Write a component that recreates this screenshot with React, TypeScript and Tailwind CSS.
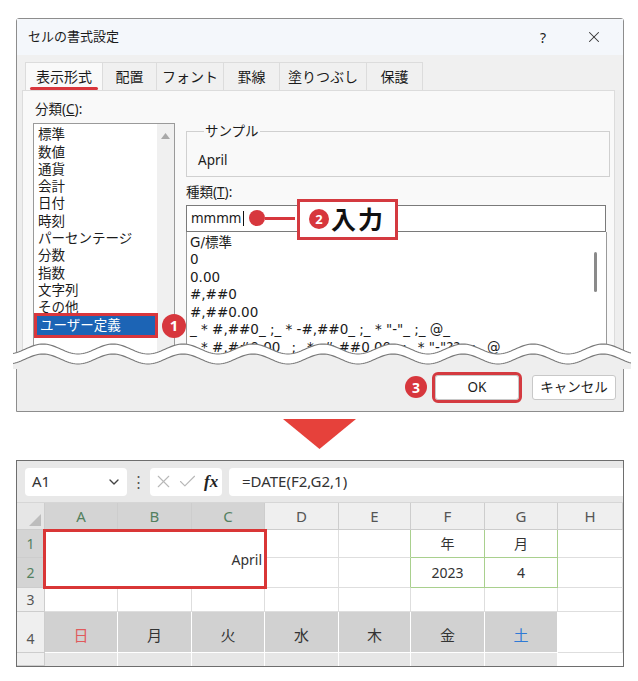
import { Check, ChevronDown, X } from 'lucide-react';

const CATEGORIES = ['標準', '数値', '通貨', '会計', '日付', '時刻', 'パーセンテージ', '分数', '指数', '文字列', 'その他'];

const FORMATS = [
  'G/標準',
  '0',
  '0.00',
  '#,##0',
  '#,##0.00',
  '_ * #,##0_ ;_ * -#,##0_ ;_ * "-"_ ;_ @_',
  '_ * #,##0.00_ ;_ * -#,##0.00_ ;_ * "-"??_ ;_ @_',
];

const TABS = [
  { t: '表示形式', w: 'w-[78px]' },
  { t: '配置', w: 'w-[54px]' },
  { t: 'フォント', w: 'w-[67px]' },
  { t: '罫線', w: 'w-[56px]' },
  { t: '塗りつぶし', w: 'w-[87px]' },
  { t: '保護', w: 'w-[56px]' },
];

const DAYS = [
  { t: '日', c: 'text-[#e05a5c]' },
  { t: '月', c: 'text-[#333]' },
  { t: '火', c: 'text-[#333]' },
  { t: '水', c: 'text-[#333]' },
  { t: '木', c: 'text-[#333]' },
  { t: '金', c: 'text-[#333]' },
  { t: '土', c: 'text-[#2f7ad6]' },
];

// torn-paper wave for the cut between the dialog halves
function wave(y0: number, w: number) {
  const pts: string[] = [];
  for (let x = 0; x <= w; x += 2) {
    const y = y0 + 5 * Math.sin(((x - 30) / 70) * 2 * Math.PI - Math.PI / 2);
    pts.push(`${x} ${y.toFixed(2)}`);
  }
  return pts;
}

const WW = 618;
const TOPW = wave(10, WW);
const BOTW = wave(20, WW);
const BAND = 'M' + TOPW.join(' L') + ' L' + BOTW.slice().reverse().join(' L') + ' Z';
const BELOW = 'M' + BOTW.join(' L') + ` L${WW} 30 L0 30 Z`;

function Badge({ n, size }: { n: string; size: string }) {
  return (
    <span className={`${size} rounded-full bg-[#d7373d] text-white font-bold flex items-center justify-center shrink-0`}>{n}</span>
  );
}

function Dialog() {
  return (
    <div className="ml-4 mt-[18px] w-[608px] h-[394px] border border-[#8d8d8d] rounded-t-[3px] bg-[#eeeeee] flex flex-col relative">
      {/* title bar */}
      <div className="h-[36px] bg-[#f4f7fb] flex items-center pl-[11px] pr-[20px] text-[13px] text-[#1b1b1b]">
        <span className="flex-1">セルの書式設定</span>
        <span className="w-[30px] text-center text-[14px]">?</span>
        <X size={18} strokeWidth={1.4} className="ml-[27px] text-[#333]" />
      </div>

      {/* tabs */}
      <div className="h-[35px] flex items-end pl-[8px] bg-[#f0f0f0]">
        {TABS.map((t, i) => (
          <div
            key={t.t}
            className={`${t.w} h-[28px] flex items-center justify-center text-[14px] text-[#1b1b1b] relative border-t border-r border-[#dcdcdc] ${
              i === 0 ? 'bg-[#f9f9f9] border-l' : 'bg-[#f0f0f0]'
            }`}
          >
            {t.t}
            {i === 0 && <span className="absolute left-[4px] right-[4px] bottom-[0px] h-[3px] rounded-full bg-[#d9363c]" />}
          </div>
        ))}
      </div>

      {/* panel */}
      <div className="ml-[5px] mr-[8px] h-[268px] border border-[#dcdcdc] bg-[#f9f9f9] flex overflow-hidden text-[13.5px] text-[#1b1b1b] leading-[17.3px]">
        <div className="ml-[10px] w-[142px] pt-[10px] flex flex-col">
          <div className="ml-[2px]">
            分類(<span className="underline">C</span>):
          </div>
          <div className="mt-[5px] flex-1 border border-[#9a9a9a] bg-white flex">
            <div className="flex-1 pt-[2px]">
              {CATEGORIES.map((c) => (
                <div key={c} className="pl-[4px]">{c}</div>
              ))}
              <div className="ml-[3px] mr-[2px] pl-[3px] py-px -my-px bg-[#1c64b5] text-white outline-[3px] outline-solid outline-[#d9363c] relative">
                ユーザー定義
                <span className="absolute -right-[31px] -top-[2px]">
                  <Badge n="1" size="w-[24px] h-[24px] text-[15px]" />
                </span>
              </div>
            </div>
            <div className="w-[17px] bg-[#f0f0f0] flex justify-center pt-[9px]">
              <svg width="9" height="6" viewBox="0 0 9 6">
                <polygon points="4.5,0 9,6 0,6" fill="#a8a8a8" />
              </svg>
            </div>
          </div>
        </div>

        <div className="ml-[11px] w-[424px] flex flex-col">
          <fieldset className="mt-[32px] border border-[#d0d0d0] pb-[6px] pl-[11px]">
            <legend className="ml-[6px] px-[1px]">サンプル</legend>
            <div className="pt-[12px]">April</div>
          </fieldset>
          <div className="mt-[7px]">
            種類(<span className="underline">T</span>):
          </div>
          <div className="mt-[4px] w-[420px] h-[27px] border border-[#7a7a7a] bg-white flex items-center pl-[4px] relative">
            <span>mmmm</span>
            <span className="w-px h-[15px] bg-[#111] ml-px" />
            <span className="w-[16px] h-[16px] rounded-full bg-[#d7373d] ml-[5px] shrink-0" />
            <span className="w-[30px] h-[3px] bg-[#d7373d] shrink-0" />
            <div className="absolute left-[110px] -top-[7px] w-[101px] h-[41px] border-[3px] border-[#d43a40] bg-white flex items-center pl-[9px] gap-[2px]">
              <Badge n="2" size="w-[20px] h-[20px] text-[13px]" />
              <span className="text-[25px] font-bold text-[#111] leading-none tracking-[2px]">入力</span>
            </div>
          </div>
          <div className="w-[421px] flex-1 border border-t-0 border-[#9a9a9a] bg-white flex leading-[17.5px]">
            <div className="flex-1 pt-[2px] pl-[3px] whitespace-pre text-[13.5px] font-['DejaVu_Sans','Noto_Sans_CJK_JP',sans-serif]">
              {FORMATS.map((f) => (
                <div key={f}>{f}</div>
              ))}
            </div>
            <div className="w-[22px] flex justify-center pt-[20px]">
              <div className="w-[3px] h-[40px] rounded-full bg-[#8a8a8a]" />
            </div>
          </div>
        </div>
      </div>

      {/* cut */}
      <svg className="absolute left-[-4px] top-[320px]" width={WW} height="30" viewBox={`0 0 ${WW} 30`}>
        <path d={BELOW} fill="#eeeeee" />
        <path d={BAND} fill="#ffffff" />
        <path d={'M' + TOPW.join(' L')} fill="none" stroke="#777" strokeWidth="1.1" />
        <path d={'M' + BOTW.join(' L')} fill="none" stroke="#777" strokeWidth="1.1" />
      </svg>

      {/* buttons */}
      <div className="flex-1 flex items-center justify-end pr-[7px] pt-[5px] text-[13.5px] text-[#1b1b1b]">
        <Badge n="3" size="w-[22px] h-[22px] text-[14px]" />
        <div className="ml-[8px] w-[84px] h-[25px] rounded-[3px] border border-[#c8c8c8] bg-white flex items-center justify-center outline-[3px] outline-solid outline-[#d43a40]">
          OK
        </div>
        <div className="ml-[13px] w-[84px] h-[25px] rounded-[3px] border border-[#c8c8c8] bg-white flex items-center justify-center">
          キャンセル
        </div>
      </div>
    </div>
  );
}

const CELL = 'border-r border-b border-[#dedede] bg-white flex items-center justify-center';
const HEAD = 'border-r border-b border-[#cdcdcd] flex items-center justify-center';

function Sheet() {
  const cols = ['A', 'B', 'C', 'D', 'E', 'F', 'G', 'H'];
  return (
    <div className="ml-4 mt-[11px] w-[608px] h-[207px] border border-[#6e6e6e] flex flex-col text-[#333]">
      {/* formula bar */}
      <div className="h-[42px] bg-[#e8e8e8] flex items-center pl-[8px] border-b border-[#d6d6d6]">
        <div className="w-[102px] h-[28px] rounded-[4px] bg-white flex items-center pl-[7px] pr-[5px] text-[15px]">
          <span className="flex-1">A1</span>
          <ChevronDown size={16} strokeWidth={2} className="text-[#444]" />
        </div>
        <span className="w-[23px] text-center text-[15px] text-[#555]">⋮</span>
        <div className="w-[72px] h-[28px] rounded-[4px] bg-white flex items-center pl-[3px] gap-[3px]">
          <X size={21} strokeWidth={1.3} className="text-[#b8b8b8]" />
          <Check size={21} strokeWidth={1.3} className="text-[#b8b8b8]" />
          <span className="ml-[3px] font-['Liberation_Serif',serif] italic font-bold text-[17px] text-[#222]">fx</span>
        </div>
        <div className="ml-[7px] flex-1 h-[28px] rounded-l-[4px] bg-white flex items-center pl-[13px] text-[15px]">
          =DATE(F2,G2,1)
        </div>
      </div>

      <div className="flex-1 grid grid-cols-[28px_73px_74px_73px_74px_72px_74px_73px_1fr] grid-rows-[27px_28px_30px_24px_41px_1fr] overflow-hidden">
        {/* header row */}
        <div className="border-r border-b border-[#cdcdcd] bg-[#e6e6e6] flex items-end justify-end p-[3px]">
          <svg width="12" height="12" viewBox="0 0 12 12">
            <polygon points="12,0 12,12 0,12" fill="#bdbdbd" />
          </svg>
        </div>
        {cols.map((c, i) => (
          <div key={c} className={`${HEAD} text-[15px] ${i < 3 ? 'bg-[#d4d4d4] text-[#53805f]' : 'bg-[#efefef] text-[#555]'}`}>
            {c}
          </div>
        ))}

        {/* row 1 */}
        <div className={`${HEAD} bg-[#d4d4d4] text-[#53805f] text-[14px]`}>1</div>
        <div className="col-span-3 row-span-2 -ml-[2px] -mr-[2px] -mt-[1px] -mb-[1px] border-[3px] border-[#d93636] bg-white flex items-center justify-end pr-[2px] text-[14px] relative z-10">
          April
        </div>
        <div className={CELL} />
        <div className={`${CELL} border-r-[#a9d08e]`} />
        <div className={`${CELL} bg-[#e2efda] border-r-[#a9d08e] border-b-[#a9d08e] text-[14px]`}>年</div>
        <div className={`${CELL} bg-[#e2efda] border-r-[#a9d08e] border-b-[#a9d08e] text-[14px]`}>月</div>
        <div className={CELL} />

        {/* row 2 */}
        <div className={`${HEAD} bg-[#d4d4d4] text-[#53805f] text-[14px]`}>2</div>
        <div className={CELL} />
        <div className={`${CELL} border-r-[#a9d08e]`} />
        <div className={`${CELL} border-r-[#a9d08e] border-b-[#a9d08e] text-[14px]`}>2023</div>
        <div className={`${CELL} border-r-[#a9d08e] border-b-[#a9d08e] text-[14px]`}>4</div>
        <div className={CELL} />

        {/* row 3 */}
        <div className={`${HEAD} bg-[#efefef] text-[#555] text-[14px]`}>3</div>
        {cols.map((c) => (
          <div key={c} className={CELL} />
        ))}

        {/* row 4 */}
        <div className={`${HEAD} bg-[#efefef] text-[#555] text-[14px] items-end pb-[3px]`}>4</div>
        {DAYS.map((d) => (
          <div key={d.t} className={`border-r border-b border-white bg-[#d1d1d1] flex items-center justify-center pt-[6px] text-[15px] ${d.c}`}>
            {d.t}
          </div>
        ))}
        <div className={CELL} />

        {/* row 5 */}
        <div className={`${HEAD} bg-[#efefef]`} />
        {DAYS.map((d) => (
          <div key={d.t} className="border-r border-white bg-[#e6e6e6]" />
        ))}
        <div className="bg-white" />
      </div>
    </div>
  );
}

export default function App() {
  return (
    <div className="w-[638px] h-[681px] bg-white overflow-hidden font-['Noto_Sans','Noto_Sans_CJK_JP',sans-serif]">
      <Dialog />
      <div className="mt-[7px] ml-[283px]">
        <svg width="73" height="30" viewBox="0 0 73 30" className="block">
          <polygon points="0,0 73,0 36.5,30" fill="#e6413b" />
        </svg>
      </div>
      <Sheet />
    </div>
  );
}
